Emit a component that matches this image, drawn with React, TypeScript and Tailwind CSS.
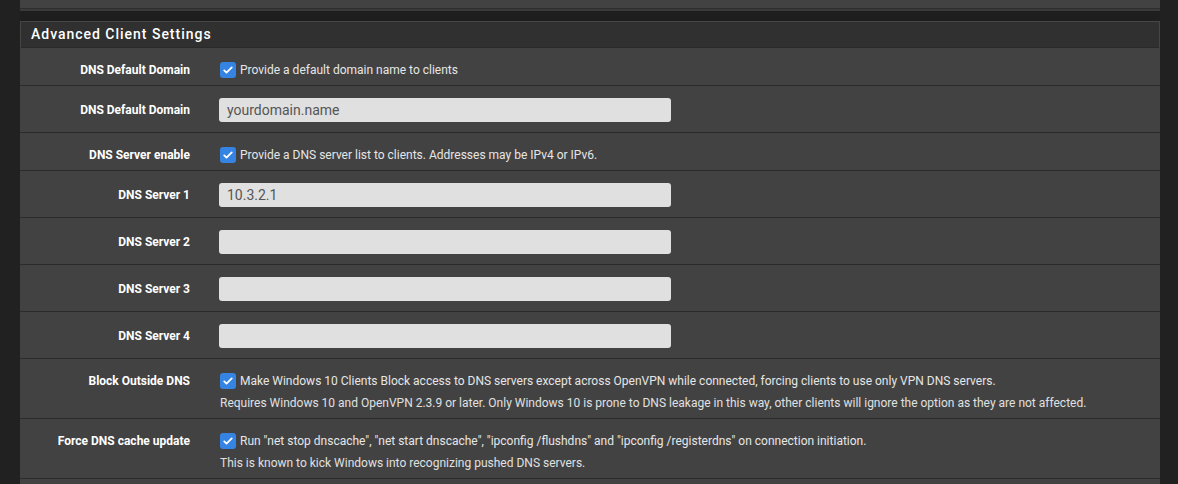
import React from "react";

const Check = () => (
  <span className="inline-flex h-[16px] w-[16px] shrink-0 items-center justify-center rounded-[3px] bg-[#3584e4]">
    <svg viewBox="0 0 16 16" className="h-[12px] w-[12px]" fill="none">
      <path d="M3 8.5l3 3 7-7" stroke="#fff" strokeWidth="2.4" strokeLinecap="round" strokeLinejoin="round" />
    </svg>
  </span>
);

const Label = ({ children }: { children: React.ReactNode }) => (
  <div className="w-[170px] shrink-0 text-right text-[12px] font-bold leading-[17px] text-white">{children}</div>
);

const CheckRow = ({ label, text, help }: { label: string; text: string; help?: string }) => (
  <div className="flex border-b border-[#2b2b2b] pt-[14px] pb-[6px]">
    <Label>{label}</Label>
    <div className="ml-[30px] flex flex-col">
      <div className="flex items-start gap-[4px] text-[12px] leading-[17px] text-[#e6e6e6]">
        <Check />
        <span>{text}</span>
      </div>
      {help && <div className="mt-[5px] text-[12px] leading-[17px] text-[#e0e0e0]">{help}</div>}
    </div>
  </div>
);

const InputRow = ({ label, value }: { label: string; value?: string }) => (
  <div className="flex items-center border-b border-[#2b2b2b] pt-[12px] pb-[10px]">
    <Label>{label}</Label>
    <div className="ml-[29px] flex h-[24px] w-[452px] items-center rounded-[3px] bg-[#e0e0e0] px-[8px] text-[14px] text-[#555]">
      {value}
    </div>
  </div>
);

export default function App() {
  return (
    <div className="flex h-[484px] w-[1178px] overflow-hidden bg-[#212121]" style={{ fontFamily: "Roboto, 'Liberation Sans', sans-serif" }}>
      <div className="ml-[20px] flex w-[1140px] flex-col">
        <div className="h-[9px] shrink-0 border-b border-[#2e2e2e] bg-[#424242]" />
        <div className="h-[2px] shrink-0 bg-[#3a3a3a]" />
        <div className="h-[10px] shrink-0 bg-[#1e1e1e]" />
        <div className="flex h-[27px] shrink-0 items-center border border-[#464646] border-b-[#2a2a2a] bg-[#303030] pl-[10px] text-[14px] font-medium tracking-[0.07em] text-white">
          Advanced Client Settings
        </div>
        <div className="flex flex-1 flex-col bg-[#424242]">
          <CheckRow label="DNS Default Domain" text="Provide a default domain name to clients" />
          <InputRow label="DNS Default Domain" value="yourdomain.name" />
          <CheckRow label="DNS Server enable" text="Provide a DNS server list to clients. Addresses may be IPv4 or IPv6." />
          <InputRow label="DNS Server 1" value="10.3.2.1" />
          <InputRow label="DNS Server 2" />
          <InputRow label="DNS Server 3" />
          <InputRow label="DNS Server 4" />
          <CheckRow
            label="Block Outside DNS"
            text="Make Windows 10 Clients Block access to DNS servers except across OpenVPN while connected, forcing clients to use only VPN DNS servers."
            help="Requires Windows 10 and OpenVPN 2.3.9 or later. Only Windows 10 is prone to DNS leakage in this way, other clients will ignore the option as they are not affected."
          />
          <CheckRow
            label="Force DNS cache update"
            text={'Run "net stop dnscache", "net start dnscache", "ipconfig /flushdns" and "ipconfig /registerdns" on connection initiation.'}
            help="This is known to kick Windows into recognizing pushed DNS servers."
          />
        </div>
      </div>
    </div>
  );
}
